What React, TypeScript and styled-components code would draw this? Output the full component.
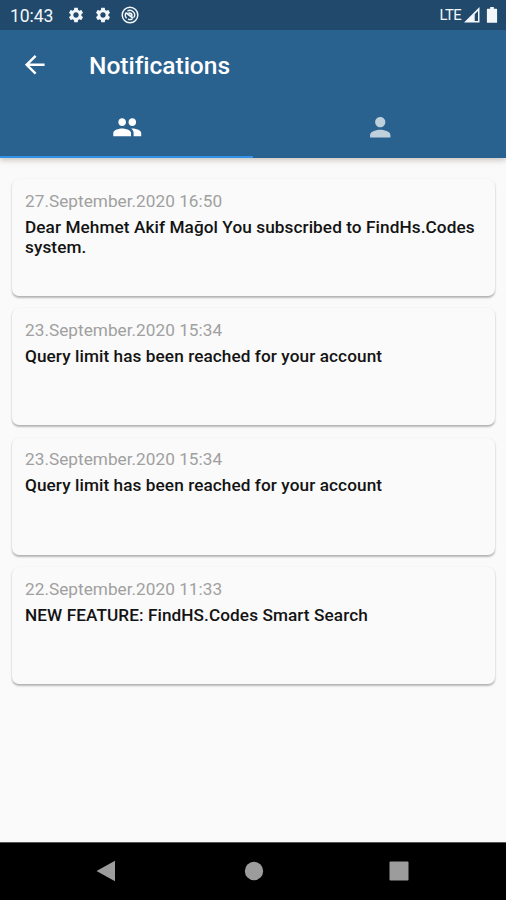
import React from "react";
import styled, { createGlobalStyle } from "styled-components";

const GlobalStyle = createGlobalStyle`
  * { box-sizing: border-box; }
  body { margin: 0; background: #fafafa; font-family: Roboto, sans-serif; }
`;

const Screen = styled.div`
  width: 506px;
  height: 900px;
  display: flex;
  flex-direction: column;
  background: #fafafa;
  overflow: hidden;
`;

const Header = styled.header`
  flex: none;
  height: 157.5px;
  display: flex;
  flex-direction: column;
  background: #29618f;
  box-shadow: 0 2px 5px rgba(60, 30, 10, 0.2), 0 1px 10px rgba(0, 0, 0, 0.08);
`;

const StatusBar = styled.div`
  flex: none;
  height: 29.5px;
  padding: 0 8px 0 10px;
  display: flex;
  align-items: center;
  background: #20496c;
  color: #f3f7fa;
`;

const Clock = styled.span`
  width: 57px;
  padding-top: 2px;
  font-size: 17.6px;
  line-height: 20px;
  letter-spacing: -0.1px;
`;

const StatusIcons = styled.div`
  display: flex;
  align-items: center;
  gap: 9px;
  padding-top: 1px;
`;

const SignalGroup = styled.div`
  margin-left: auto;
  display: flex;
  align-items: center;
  padding-top: 1px;
`;

const Network = styled.span`
  font-size: 14.8px;
  line-height: 18px;
  letter-spacing: -0.6px;
  margin-right: 3px;
`;

const AppBar = styled.div`
  flex: none;
  height: 69px;
  padding: 1px 0 0 20px;
  display: flex;
  align-items: center;
`;

const BackButton = styled.button`
  padding: 0;
  border: 0;
  background: none;
  display: flex;
  width: 69px;
  color: #fff;
`;

const Title = styled.h1`
  margin: 0;
  padding-top: 2px;
  color: #fff;
  font-size: 24.6px;
  font-weight: 500;
  line-height: 30px;
  letter-spacing: -0.05px;
`;

const Tabs = styled.nav`
  flex: 1;
  display: flex;
`;

const Tab = styled.button<{ $active?: boolean }>`
  flex: 1;
  padding: 0 0 0 1px;
  border: 0;
  border-bottom: 2.5px solid ${(p) => (p.$active ? "#3192e8" : "transparent")};
  background: none;
  display: flex;
  align-items: center;
  justify-content: center;
  color: ${(p) => (p.$active ? "#fff" : "#bfd0dd")};
`;

const List = styled.main`
  flex: 1;
  padding: 21.5px 11px 0 12px;
  display: flex;
  flex-direction: column;
  gap: 12.3px;
`;

const Card = styled.article`
  flex: none;
  height: 117px;
  padding: 11.8px 13px;
  border-radius: 7px;
  background: #fafafa;
  box-shadow: 0 1.5px 2px rgba(0, 0, 0, 0.24), 0 1px 2px rgba(0, 0, 0, 0.08);
`;

const DateLine = styled.time`
  display: block;
  color: #a0a0a0;
  font-size: 17.2px;
  line-height: 20px;
  letter-spacing: 0.03px;
`;

const Message = styled.p`
  margin: 6px 0 0;
  color: #131313;
  font-size: 17.2px;
  font-weight: 500;
  line-height: 20px;
  letter-spacing: 0.08px;
`;

const NavBar = styled.footer`
  flex: none;
  height: 58.5px;
  display: flex;
  align-items: center;
  justify-content: space-between;
  padding: 0 97px 0 96px;
  background: #000;
  border-top: 1px solid #555;
`;

const HomeIcon = styled.svg`
  margin-left: 3px;
`;

const Icon = ({ d, size }: { d: string; size: number }) => (
  <svg width={size} height={size} viewBox="0 0 24 24" fill="currentColor">
    <path d={d} />
  </svg>
);

const GEAR =
  "M19.14 12.94c.04-.3.06-.61.06-.94 0-.32-.02-.64-.07-.94l2.03-1.58c.18-.14.23-.41.12-.61l-1.92-3.32c-.12-.22-.37-.29-.59-.22l-2.39.96c-.5-.38-1.03-.7-1.62-.94l-.36-2.54c-.04-.24-.24-.41-.48-.41h-3.84c-.24 0-.43.17-.47.41l-.36 2.54c-.59.24-1.13.57-1.62.94l-2.39-.96c-.22-.08-.47 0-.59.22L2.74 8.87c-.12.21-.08.47.12.61l2.03 1.58c-.05.3-.09.63-.09.94s.02.64.07.94l-2.03 1.58c-.18.14-.23.41-.12.61l1.92 3.32c.12.22.37.29.59.22l2.39-.96c.5.38 1.03.7 1.62.94l.36 2.54c.05.24.24.41.48.41h3.84c.24 0 .44-.17.47-.41l.36-2.54c.59-.24 1.13-.56 1.62-.94l2.39.96c.22.08.47 0 .59-.22l1.92-3.32c.12-.22.07-.47-.12-.61l-2.01-1.58zM12 15.6c-1.98 0-3.6-1.62-3.6-3.6s1.62-3.6 3.6-3.6 3.6 1.62 3.6 3.6-1.62 3.6-3.6 3.6z";
const BACK = "M20 11H7.83l5.59-5.59L12 4l-8 8 8 8 1.41-1.41L7.83 13H20v-2z";
const PEOPLE =
  "M16 11c1.66 0 2.99-1.34 2.99-3S17.66 5 16 5s-3 1.34-3 3 1.34 3 3 3zm-8 0c1.66 0 2.99-1.34 2.99-3S9.66 5 8 5 5 6.34 5 8s1.34 3 3 3zm0 2c-2.33 0-7 1.17-7 3.5V19h14v-2.5C15 14.17 10.33 13 8 13zm8 0c-.29 0-.62.02-.97.05 1.16.84 1.97 1.97 1.97 3.45V19h6v-2.5c0-2.33-4.67-3.5-7-3.5z";
const PERSON =
  "M12 12c2.21 0 4-1.79 4-4s-1.79-4-4-4-4 1.79-4 4 1.79 4 4 4zm0 2c-2.67 0-8 1.34-8 4v2h16v-2c0-2.66-5.33-4-8-4z";

const NOTIFICATIONS = [
  { date: "27.September.2020 16:50", text: "Dear Mehmet Akif Mağol You subscribed to FindHs.Codes system." },
  { date: "23.September.2020 15:34", text: "Query limit has been reached for your account" },
  { date: "23.September.2020 15:34", text: "Query limit has been reached for your account" },
  { date: "22.September.2020 11:33", text: "NEW FEATURE: FindHS.Codes Smart Search" },
];

export default function App() {
  return (
    <>
      <GlobalStyle />
      <Screen>
        <Header>
          <StatusBar>
            <Clock>10:43</Clock>
            <StatusIcons>
              <Icon d={GEAR} size={18} />
              <Icon d={GEAR} size={18} />
              <svg width="18" height="18" viewBox="0 0 18 18" fill="none" stroke="currentColor">
                <circle cx="9" cy="9" r="7.8" strokeWidth="1.5" />
                <path d="M5.6 12.2A4.7 4.7 0 0 1 5 6.6M6.4 5.1a4.7 4.7 0 0 1 6.6 6.3M7 13.2a4.7 4.7 0 0 0 4.4-.3" strokeWidth="1.4" />
                <path d="M5 6.8 12.3 12.3M7.6 7.4c1.7-.8 3.4.2 3.3 2.4" strokeWidth="1.8" />
              </svg>
            </StatusIcons>
            <SignalGroup>
              <Network>LTE</Network>
              <svg width="34" height="18" viewBox="0 0 34 18" fill="currentColor">
                <path fillRule="evenodd" d="M0 16.5 15.5 1v15.5zM10.7 8.2v6.8h3.3V4.9z" />
                <path d="M23.5 2.8h2.7V1h3.6v1.8h2.7a.6.6 0 0 1 .6.6v12.8a.6.6 0 0 1-.6.6h-9a.6.6 0 0 1-.6-.6V3.4a.6.6 0 0 1 .6-.6z" />
              </svg>
            </SignalGroup>
          </StatusBar>
          <AppBar>
            <BackButton aria-label="Back">
              <Icon d={BACK} size={29.5} />
            </BackButton>
            <Title>Notifications</Title>
          </AppBar>
          <Tabs>
            <Tab $active aria-label="Everyone">
              <Icon d={PEOPLE} size={30.5} />
            </Tab>
            <Tab aria-label="Personal">
              <Icon d={PERSON} size={30.5} />
            </Tab>
          </Tabs>
        </Header>
        <List>
          {NOTIFICATIONS.map((n, i) => (
            <Card key={i}>
              <DateLine>{n.date}</DateLine>
              <Message>{n.text}</Message>
            </Card>
          ))}
        </List>
        <NavBar>
          <svg width="19" height="22" viewBox="0 0 19 22" fill="#9c9c9c">
            <path d="M.5 11 19 .7v20.6z" />
          </svg>
          <HomeIcon width="20" height="20" viewBox="0 0 20 20" fill="#9c9c9c">
            <circle cx="10" cy="10" r="9.2" />
          </HomeIcon>
          <svg width="20" height="20" viewBox="0 0 20 20" fill="#9c9c9c">
            <rect x=".5" y=".5" width="19" height="19" rx="1" />
          </svg>
        </NavBar>
      </Screen>
    </>
  );
}
